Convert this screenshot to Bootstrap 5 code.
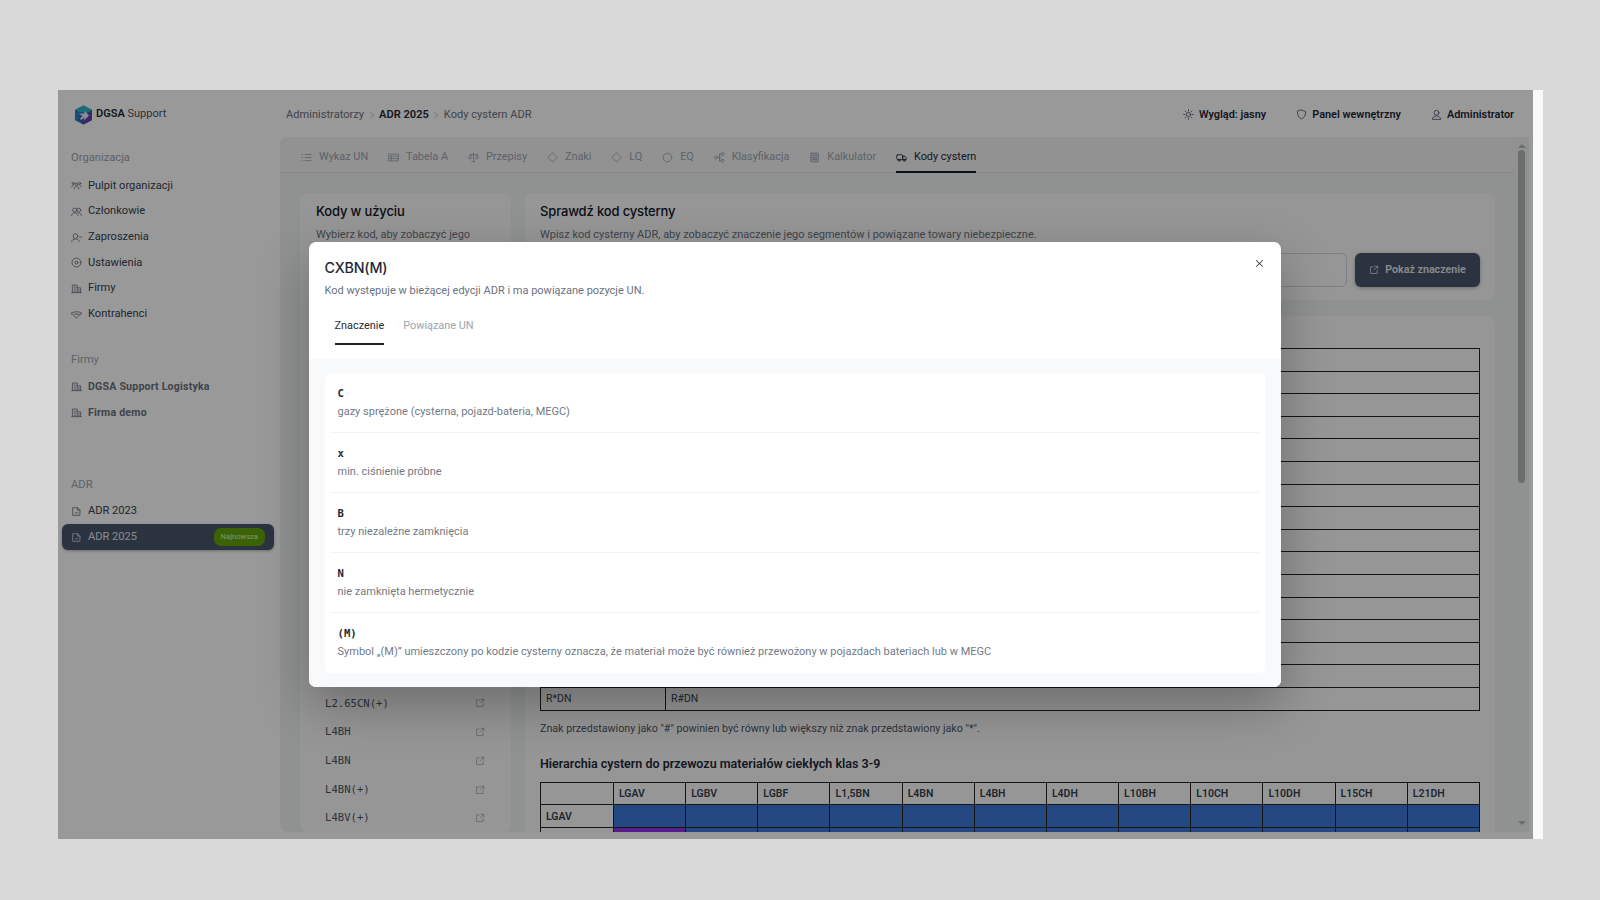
<!DOCTYPE html>
<html lang="pl">

<head>
    <meta charset="UTF-8" />
    <meta name="viewport" content="width=device-width, initial-scale=1" />
    <title>Kody cystern ADR</title>
    <link href="https://cdn.jsdelivr.net/npm/bootstrap@5.3.0/dist/css/bootstrap.min.css" rel="stylesheet" />
    <style>
        body {
            background: #d9d9d9;
            font-family: Roboto, "Liberation Sans", sans-serif;
            font-size: 11px;
            color: #374151;
            padding: 90px 0 0 58px;
            height: 900px;
            overflow: hidden;
        }

        svg.ico {
            width: 11px;
            height: 11px;
            flex: none;
            fill: none;
            stroke: currentColor;
            stroke-width: 1.2;
            stroke-linecap: round;
            stroke-linejoin: round;
        }

        .app-window {
            width: 1485px;
            height: 749px;
            background: #f8f9fa;
        }

        .app-frame {
            width: 1475px;
            background: #fff;
        }

        .dim-layer {
            inset: 0;
            background: rgba(0, 0, 0, .4);
            z-index: 5;
        }

        /* sidebar */
        .side-col {
            width: 222px;
            padding: 0 6px 0 4px;
        }

        .brand-row {
            height: 47px;
            padding: 2px 0 0 12px;
            gap: 3px;
            font-size: 11px;
            color: #1f2937;
        }

        .brand-row span span {
            color: #4b5563;
        }

        .side-label {
            height: 18px;
            line-height: 20px;
            margin: 11px 0 7px 9px;
            color: #9ca3af;
            font-size: 11.2px;
        }

        .side-label.gap-firmy {
            margin: 23px 0 6px 9px;
        }

        .side-label.gap-adr {
            margin: 49px 0 6px 9px;
        }

        .side-item {
            height: 25.7px;
            padding: 0 9px;
            gap: 6px;
            color: #374151;
            font-size: 11.1px;
            text-decoration: none;
            border-radius: 6px;
        }

        .side-item svg {
            color: #6b7280;
        }

        .side-item.firm {
            font-weight: 700;
            font-size: 10.6px;
            letter-spacing: .2px;
            color: #6b7280;
        }

        .side-item.active {
            background: #475569;
            color: #e5e7eb;
            box-shadow: 0 1px 3px rgba(0, 0, 0, .3);
            height: 26px;
        }

        .side-item.active svg {
            color: #cbd5e1;
        }

        .new-tag {
            background: #65a30d;
            color: #d9f99d;
            font-size: 7.6px;
            border-radius: 7px;
            padding: 3px 7px;
            margin-right: 0;
        }

        /* top bar */
        .top-row {
            height: 47px;
            padding: 3px 19px 0 6px;
        }

        .crumbs {
            gap: 3.5px;
            color: #6b7280;
            font-size: 11.1px;
        }

        .crumbs b {
            color: #1f2937;
            font-weight: 600;
        }

        .crumbs svg {
            width: 8px;
            height: 8px;
            color: #9ca3af;
        }

        .top-link {
            gap: 5px;
            font-weight: 600;
            color: #1f2937;
            font-size: 10.9px;
            margin-left: 30px;
        }

        .top-link svg {
            color: #4b5563;
        }

        /* main panel */
        .panel-box {
            height: 695px;
            margin-bottom: 6px;
            background: #f1f3f3;
            border-radius: 8px 0 0 8px;
            overflow: hidden;
            margin-right: 4px;
        }

        .panel-tabs {
            height: 36px;
            padding: 0 0 0 21px;
            gap: 19.8px;
            border-bottom: 1px solid #e5e7eb;
            background: #f3f4f4;
        }

        .panel-tab {
            height: 36px;
            padding-top: 6px;
            gap: 7px;
            color: #9ca3af;
            font-size: 10.9px;
            border-bottom: 2px solid transparent;
            margin-bottom: -1px;
            text-decoration: none;
        }

        .panel-tab.active {
            color: #1f2937;
            border-bottom-color: #111827;
        }

        .scroll-body {
            padding: 20px 19px 0 20px;
            gap: 14px;
            overflow: hidden;
            min-height: 0;
        }

        .soft-card {
            background: #fbfbfb;
            border-radius: 8px;
            padding: 9px 15px;
        }

        .codes-col {
            width: 211px;
            flex: none;
            padding-left: 16px;
        }

        .card-head {
            font-family: Inter, "Liberation Sans", sans-serif;
            font-size: 13px;
            font-weight: 500;
            letter-spacing: -.15px;
            color: #111827;
            margin: 0 0 6px;
            line-height: 18px;
        }

        .card-note {
            color: #6b7280;
            font-size: 11px;
            line-height: 17px;
            margin: 0;
        }

        .code-row {
            height: 28.7px;
            padding: 0 11px 0 9px;
            font-family: "DejaVu Sans Mono", monospace;
            font-size: 10.6px;
            color: #4b5563;
        }

        .code-row svg {
            width: 10px;
            height: 10px;
            color: #9ca3af;
        }

        .code-list {
            margin-top: 44.5px;
        }

        .check-card {
            height: 107px;
        }

        .check-row {
            margin-top: 10px;
        }

        .code-input {
            flex: 1;
            height: 34px;
            border: 1px solid #d1d5db;
            border-radius: 6px;
            background: #fbfbfb;
        }

        .show-btn {
            width: 125px;
            height: 34px;
            background: #475569;
            border: 0;
            color: #e5e7eb;
            font-size: 10.7px;
            font-weight: 600;
            border-radius: 6px;
            gap: 6px;
            box-shadow: 0 1px 4px rgba(0, 0, 0, .3);
        }

        .show-btn svg {
            width: 10px;
            height: 10px;
        }

        .tank-table {
            table-layout: fixed;
            border-collapse: collapse;
            width: 940px;
            font-size: 10.5px;
            color: #374151;
        }

        .tank-table td {
            border: 1px solid #222;
            height: 22.6px;
            padding: 1px 5px 0;
        }

        .tier-table td {
            font-weight: 600;
        }

        .cell-blue {
            background: #3c7bd9;
        }

        .cell-purple {
            background: #9333ea;
        }

        .foot-note {
            font-size: 10.7px;
            color: #4b5563;
            margin: 11px 0 0;
            line-height: 14px;
        }

        .tier-head {
            font-size: 12.5px;
            font-weight: 600;
            color: #1f2937;
            margin: 19px 0 9px;
            line-height: 18px;
        }

        /* the first heading sits behind the dialog, only its room is kept */
        .head-room {
            height: 23px;
        }

        /* scrollbar */
        .fake-scroll {
            width: 15px;
            padding-top: 7px;
            gap: 2px;
        }

        .fake-scroll i {
            display: block;
            width: 0;
            height: 0;
            border-left: 4px solid transparent;
            border-right: 4px solid transparent;
        }

        .fake-scroll i.up {
            border-bottom: 4px solid #b2b6b7;
        }

        .fake-scroll i.down {
            border-top: 4px solid #b2b6b7;
            margin: auto 0 7px;
        }

        .fake-thumb {
            width: 7px;
            height: 333px;
            background: #b2b6b7;
            border-radius: 4px;
        }

        /* dialog */
        .code-dialog {
            width: 972px;
            height: 445px;
            margin-right: 2px;
            border: 0;
            background: #fff;
            border-radius: 7px;
            box-shadow: 0 18px 50px rgba(0, 0, 0, .28);
            overflow: hidden;
        }

        .dialog-top {
            height: 117px;
            padding: 16px 16px 0;
        }

        .dialog-title {
            font-family: Inter, "Liberation Sans", sans-serif;
            font-size: 14.3px;
            font-weight: 500;
            letter-spacing: -.2px;
            color: #1f2937;
            line-height: 20px;
            margin: 0 0 5px;
        }

        .dialog-sub {
            font-size: 11px;
            color: #6b7280;
            line-height: 16px;
            margin: 0;
        }

        .dialog-close {
            top: 16px;
            right: 16px;
            font-size: 7px;
            opacity: .8;
        }

        .dialog-tabs {
            gap: 19px;
            margin: 10px 0 0 10px;
        }

        .dialog-tab {
            height: 36px;
            color: #9ca3af;
            font-size: 10.9px;
            border-bottom: 2px solid transparent;
            text-decoration: none;
        }

        .dialog-tab.active {
            color: #1f2937;
            border-bottom-color: #212529;
        }

        .dialog-body {
            background: #f8f9fb;
            padding: 14px 16px;
        }

        .seg-card {
            background: #fff;
            border-radius: 6px;
            padding: 0 6px;
            height: 300px;
        }

        .seg-row {
            height: 60px;
            padding: 11px 7px 0;
            border-bottom: 1px solid #f1f3f5;
        }

        .seg-row:last-child {
            border-bottom: 0;
        }

        .seg-code {
            font-family: "DejaVu Sans Mono", monospace;
            font-weight: 700;
            font-size: 10.6px;
            color: #1f2937;
            line-height: 19px;
        }

        .seg-text {
            font-size: 11px;
            color: #737a85;
            line-height: 18px;
        }
    </style>
</head>

<body>

    <svg width="0" height="0" class="position-absolute">
        <symbol id="i-people" viewBox="0 0 16 16"><circle cx="8" cy="6" r="2"/><circle cx="3.2" cy="5" r="1.5"/><circle cx="12.8" cy="5" r="1.5"/><path d="M4.5 13c.3-2.5 1.6-3.6 3.5-3.6s3.200 1.100 3.500 3.600M1 10c.2-1.300 1-2 2.200-2M15 10c-.2-1.300-1-2-2.200-2"/></symbol>
        <symbol id="i-users" viewBox="0 0 16 16"><circle cx="5.500" cy="6" r="3"/><circle cx="11" cy="6" r="3"/><path d="M1 14c0-2.500 2-4 4.500-4s4.500 1.500 4.500 4M11 10c2.400 0 4 1.500 4 4"/></symbol>
        <symbol id="i-invite" viewBox="0 0 16 16"><circle cx="6.500" cy="6" r="3.500"/><path d="M1 14c.5-2.500 2.500-4 5.500-4s5 1.500 5.500 4M12.500 7.500h3"/></symbol>
        <symbol id="i-gear" viewBox="0 0 16 16"><circle cx="8" cy="8" r="2.200"/><circle cx="8" cy="8" r="6.500"/></symbol>
        <symbol id="i-firm" viewBox="0 0 16 16"><path d="M2 14V3h7v11M9 7h5v7M1 14h14M4.500 6h2M4.500 9h2M4.500 12h2M11 10h1M11 12h1"/></symbol>
        <symbol id="i-shake" viewBox="0 0 16 16"><path d="M1 5.500c3-2 11-2 14 0v2c-2 .5-3 1-4 2.500l-2 2.500c-1 .5-2 .500-3-.500L4.500 10C3.500 8.500 3 8 1 7.500zM5 7.500h7"/></symbol>
        <symbol id="i-doc" viewBox="0 0 16 16"><path d="M3 2.500h6.500L13 6v7.500H3zM9.500 2.500V6H13M6 10h4"/></symbol>
        <symbol id="i-chev" viewBox="0 0 16 16"><path d="M5 2l6 6-6 6"/></symbol>
        <symbol id="i-sun" viewBox="0 0 16 16"><circle cx="8" cy="8" r="3"/><path d="M8 1v2M8 13v2M1 8h2M13 8h2M3 3l1.400 1.400M11.600 11.600L13 13M3 13l1.400-1.400M11.600 4.400L13 3"/></symbol>
        <symbol id="i-shield" viewBox="0 0 16 16"><path d="M8 1.500l6 2c0 5.500-1.500 9-6 11-4.500-2-6-5.500-6-11z"/></symbol>
        <symbol id="i-user" viewBox="0 0 16 16"><circle cx="8" cy="5.500" r="3.500"/><path d="M2 14.500c.5-3 3-4.500 6-4.500s5.500 1.500 6 4.500z"/></symbol>
        <symbol id="i-list" viewBox="0 0 16 16"><path d="M6 3.500h9M6 8h9M6 12.500h9M1.500 3.500h1M1.500 8h1M1.500 12.500h1"/></symbol>
        <symbol id="i-table" viewBox="0 0 16 16"><path d="M1 3h14v10H1zM1 6h14M1 9.500h14M5 6v7"/></symbol>
        <symbol id="i-scale" viewBox="0 0 16 16"><path d="M8 2v12M5.500 14h5M3 4l5-1 5 1M3 4L1 9c.5 1.500 3.500 1.500 4 0zM13 4l-2 5c.5 1.500 3.500 1.500 4 0z"/></symbol>
        <symbol id="i-diamond" viewBox="0 0 16 16"><path d="M8 1.500L14.500 8 8 14.500 1.500 8z"/></symbol>
        <symbol id="i-circle" viewBox="0 0 16 16"><circle cx="8" cy="8" r="6.300"/></symbol>
        <symbol id="i-tree" viewBox="0 0 16 16"><circle cx="3" cy="8" r="2"/><rect x="10.500" y="1.500" width="4" height="3.500" rx="1"/><rect x="10.500" y="11" width="4" height="3.500" rx="1"/><path d="M5 8h5M8 3.200v9.600M8 3.200h2.500M8 12.800h2.500"/></symbol>
        <symbol id="i-calc" viewBox="0 0 16 16"><rect x="2.500" y="1.500" width="11" height="13" rx="1" fill="currentColor" fill-opacity=".35"/><path d="M5 4.500h6M5 8h6M5 11h6"/></symbol>
        <symbol id="i-truck" viewBox="0 0 16 16"><rect x="1" y="4" width="9" height="7" rx="1.500"/><path d="M10 6h3l2 3v2h-5z"/><circle cx="4.500" cy="12" r="1.500"/><circle cx="12" cy="12" r="1.500"/></symbol>
        <symbol id="i-out" viewBox="0 0 16 16"><path d="M7 3H2.500v10.500H13V9M9.500 2H14v4.500M14 2L8 8"/></symbol>
    </svg>

    <div class="app-window d-flex">
        <div class="app-frame d-flex position-relative">

            <aside class="side-col flex-shrink-0">
                <div class="brand-row d-flex align-items-center">
                    <svg width="19" height="20" viewBox="0 0 19 20">
                        <path d="M9.500 0.500L18 5v10l-8.500 4.500L1 15V5z" fill="#3b5bb5" />
                        <path d="M9.500 0.500L18 5l-5 3-8-1-4-2z" fill="#2fb6c9" />
                        <path d="M1 5l4 2v8l4.500 4.500L1 15z" fill="#2b7fc4" />
                        <path d="M18 5v10l-8.500 4.500 1-6z" fill="#6a3fb5" />
                        <path d="M4.500 8.500h6V6l4.500 4.500-5 5 .5-3-3.500 2.500-1-1.500 2.500-2.500z" fill="#e8eef8" />
                    </svg>
                    <span><b class="fw-semibold">DGSA</b> <span>Support</span></span>
                </div>

                <div class="side-label">Organizacja</div>
                <a class="side-item d-flex align-items-center" href="#"><svg class="ico"><use href="#i-people"/></svg>Pulpit organizacji</a>
                <a class="side-item d-flex align-items-center" href="#"><svg class="ico"><use href="#i-users"/></svg>Członkowie</a>
                <a class="side-item d-flex align-items-center" href="#"><svg class="ico"><use href="#i-invite"/></svg>Zaproszenia</a>
                <a class="side-item d-flex align-items-center" href="#"><svg class="ico"><use href="#i-gear"/></svg>Ustawienia</a>
                <a class="side-item d-flex align-items-center" href="#"><svg class="ico"><use href="#i-firm"/></svg>Firmy</a>
                <a class="side-item d-flex align-items-center" href="#"><svg class="ico"><use href="#i-shake"/></svg>Kontrahenci</a>

                <div class="side-label gap-firmy">Firmy</div>
                <a class="side-item firm d-flex align-items-center" href="#"><svg class="ico"><use href="#i-firm"/></svg>DGSA Support Logistyka</a>
                <a class="side-item firm d-flex align-items-center" href="#"><svg class="ico"><use href="#i-firm"/></svg>Firma demo</a>

                <div class="side-label gap-adr">ADR</div>
                <a class="side-item d-flex align-items-center" href="#"><svg class="ico"><use href="#i-doc"/></svg>ADR 2023</a>
                <a class="side-item active d-flex align-items-center" href="#"><svg class="ico"><use href="#i-doc"/></svg>ADR 2025<span class="new-tag ms-auto">Najnowsza</span></a>
            </aside>

            <div class="flex-grow-1 d-flex flex-column" style="min-width:0">
                <header class="top-row d-flex align-items-center">
                    <div class="crumbs d-flex align-items-center">
                        <span>Administratorzy</span><svg class="ico"><use href="#i-chev"/></svg><b>ADR 2025</b><svg class="ico"><use href="#i-chev"/></svg><span>Kody cystern ADR</span>
                    </div>
                    <div class="top-link d-flex align-items-center ms-auto"><svg class="ico"><use href="#i-sun"/></svg>Wygląd: jasny</div>
                    <div class="top-link d-flex align-items-center"><svg class="ico"><use href="#i-shield"/></svg>Panel wewnętrzny</div>
                    <div class="top-link d-flex align-items-center"><svg class="ico"><use href="#i-user"/></svg>Administrator</div>
                </header>

                <main class="panel-box d-flex">
                    <div class="flex-grow-1 d-flex flex-column" style="min-width:0">
                        <nav class="panel-tabs d-flex flex-shrink-0">
                            <a class="panel-tab d-flex align-items-center" href="#"><svg class="ico"><use href="#i-list"/></svg>Wykaz UN</a>
                            <a class="panel-tab d-flex align-items-center" href="#"><svg class="ico"><use href="#i-table"/></svg>Tabela A</a>
                            <a class="panel-tab d-flex align-items-center" href="#"><svg class="ico"><use href="#i-scale"/></svg>Przepisy</a>
                            <a class="panel-tab d-flex align-items-center" href="#"><svg class="ico"><use href="#i-diamond"/></svg>Znaki</a>
                            <a class="panel-tab d-flex align-items-center" href="#"><svg class="ico"><use href="#i-diamond"/></svg>LQ</a>
                            <a class="panel-tab d-flex align-items-center" href="#"><svg class="ico"><use href="#i-circle"/></svg>EQ</a>
                            <a class="panel-tab d-flex align-items-center" href="#"><svg class="ico"><use href="#i-tree"/></svg>Klasyfikacja</a>
                            <a class="panel-tab d-flex align-items-center" href="#"><svg class="ico"><use href="#i-calc"/></svg>Kalkulator</a>
                            <a class="panel-tab active d-flex align-items-center" href="#"><svg class="ico"><use href="#i-truck"/></svg>Kody cystern</a>
                        </nav>

                        <div class="scroll-body d-flex flex-grow-1">
                            <section class="codes-col soft-card">
                                <h2 class="card-head">Kody w użyciu</h2>
                                <p class="card-note">Wybierz kod, aby zobaczyć jego</p>
                                <div class="code-list" id="codeList"></div>
                            </section>

                            <div class="flex-grow-1 d-flex flex-column gap-3" style="min-width:0">
                                <section class="soft-card check-card flex-shrink-0">
                                    <h2 class="card-head">Sprawdź kod cysterny</h2>
                                    <p class="card-note">Wpisz kod cysterny ADR, aby zobaczyć znaczenie jego segmentów i powiązane towary niebezpieczne.</p>
                                    <div class="d-flex gap-2 check-row">
                                        <div class="code-input"></div>
                                        <button class="show-btn d-flex align-items-center justify-content-center"><svg class="ico"><use href="#i-out"/></svg>Pokaż znaczenie</button>
                                    </div>
                                </section>

                                <section class="soft-card flex-grow-1">
                                    <div class="head-room"></div>
                                    <table class="tank-table">
                                        <colgroup><col style="width:125px"><col></colgroup>
                                        <tbody id="gasRows"></tbody>
                                    </table>
                                    <p class="foot-note">Znak przedstawiony jako "#" powinien być równy lub większy niż znak przedstawiony jako "*".</p>
                                    <div class="tier-head">Hierarchia cystern do przewozu materiałów ciekłych klas 3-9</div>
                                    <table class="tank-table tier-table">
                                        <colgroup><col style="width:73px"></colgroup>
                                        <tbody id="tierRows"></tbody>
                                    </table>
                                </section>
                            </div>
                        </div>
                    </div>

                    <div class="fake-scroll d-flex flex-column align-items-center flex-shrink-0">
                        <i class="up"></i>
                        <div class="fake-thumb"></div>
                        <i class="down"></i>
                    </div>
                </main>
            </div>

            <div class="dim-layer position-absolute d-flex align-items-center justify-content-center">
                <div class="modal-content code-dialog">
                    <div class="dialog-top position-relative">
                        <h3 class="dialog-title">CXBN(M)</h3>
                        <p class="dialog-sub">Kod występuje w bieżącej edycji ADR i ma powiązane pozycje UN.</p>
                        <button type="button" class="btn-close position-absolute dialog-close" aria-label="Zamknij"></button>
                        <div class="dialog-tabs d-flex">
                            <a class="dialog-tab active d-flex align-items-center" href="#">Znaczenie</a>
                            <a class="dialog-tab d-flex align-items-center" href="#">Powiązane UN</a>
                        </div>
                    </div>
                    <div class="dialog-body flex-grow-1">
                        <div class="seg-card">
                            <div class="seg-row"><div class="seg-code">C</div><div class="seg-text">gazy sprężone (cysterna, pojazd-bateria, MEGC)</div></div>
                            <div class="seg-row"><div class="seg-code">x</div><div class="seg-text">min. ciśnienie próbne</div></div>
                            <div class="seg-row"><div class="seg-code">B</div><div class="seg-text">trzy niezależne zamknięcia</div></div>
                            <div class="seg-row"><div class="seg-code">N</div><div class="seg-text">nie zamknięta hermetycznie</div></div>
                            <div class="seg-row"><div class="seg-code">(M)</div><div class="seg-text">Symbol „(M)” umieszczony po kodzie cysterny oznacza, że materiał może być również przewożony w pojazdach bateriach lub w MEGC</div></div>
                        </div>
                    </div>
                </div>
            </div>
        </div>
    </div>

    <script>
        // left list of codes, the first rows are hidden by the dialog
        const codes = [...Array(14).fill(""), "L2.65CN(+)", "L4BH", "L4BN", "L4BN(+)", "L4BV(+)"];
        const outIcon = '<svg class="ico"><use href="#i-out"/></svg>';
        document.getElementById("codeList").innerHTML = codes
            .map(c => `<div class="code-row d-flex align-items-center justify-content-between"><span>${c}</span>${outIcon}</div>`)
            .join("");

        // gas hierarchy, only the last row sticks out below the dialog
        const gasRows = [...Array(15).fill(["", ""]), ["R*DN", "R#DN"]];
        document.getElementById("gasRows").innerHTML = gasRows
            .map(r => `<tr><td>${r[0]}</td><td>${r[1]}</td></tr>`)
            .join("");

        // liquid hierarchy
        const tiers = ["LGAV", "LGBV", "LGBF", "L1,5BN", "L4BN", "L4BH", "L4DH", "L10BH", "L10CH", "L10DH", "L15CH", "L21DH"];
        const head = `<tr><td></td>${tiers.map(t => `<td>${t}</td>`).join("")}</tr>`;
        const row1 = `<tr><td>LGAV</td>${tiers.map(() => '<td class="cell-blue"></td>').join("")}</tr>`;
        const row2 = `<tr><td></td>${tiers.map((t, i) => `<td class="${i === 0 ? "cell-purple" : "cell-blue"}"></td>`).join("")}</tr>`;
        document.getElementById("tierRows").innerHTML = head + row1 + row2;
    </script>

    <script src="https://cdn.jsdelivr.net/npm/bootstrap@5.3.0/dist/js/bootstrap.bundle.min.js"></script>
</body>

</html>
